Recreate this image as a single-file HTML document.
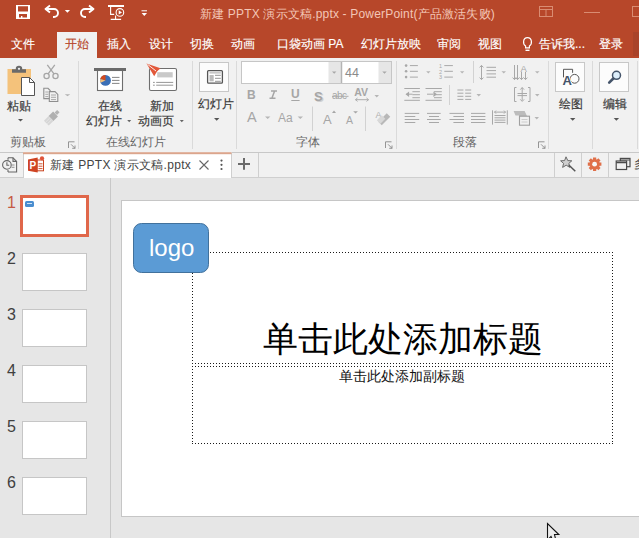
<!DOCTYPE html>
<html><head><meta charset="utf-8">
<style>
*{box-sizing:border-box;margin:0;padding:0}
html,body{width:639px;height:538px;overflow:hidden;background:#e6e6e6;font-family:"Liberation Sans",sans-serif;position:relative}
.a{position:absolute}
.t{position:absolute;white-space:nowrap;line-height:1}
#title{left:0;top:0;width:639px;height:32px;background:#b7472a}
#tabs{left:0;top:32px;width:639px;height:26px;background:#b7472a}
.tab{position:absolute;top:38px;color:#fff;-webkit-text-stroke:0.15px #fff;font-size:12px;line-height:1;white-space:nowrap}
#ribbon{left:0;top:58px;width:639px;height:94px;background:#f1f1f1}
.sep{position:absolute;width:1px;background:#dadada}
.rt{position:absolute;color:#3c3c3c;-webkit-text-stroke:0.2px #3c3c3c;font-size:12px;line-height:1;white-space:nowrap}
.gl{position:absolute;color:#666;font-size:12px;line-height:1;white-space:nowrap;top:136px}
#doctabs{left:0;top:152px;width:639px;height:26px;background:#f1f1f1;border-bottom:1px solid #d4d4d4}
</style></head><body>
<div id="title" class="a"></div>
<div id="tabs" class="a"></div>
<div class="a" style="left:57px;top:32px;width:40px;height:26px;background:#f1f1f1"></div>
<div class="a" style="left:633px;top:32px;width:6px;height:24px;background:#a9432a"></div>
<div class="t" style="left:200px;top:8px;color:#f3c6b6;font-size:12px;letter-spacing:0.18px">新建 PPTX 演示文稿.pptx - PowerPoint(产品激活失败)</div>
<div class="tab" style="left:11px">文件</div>
<div class="tab" style="left:65px;color:#b7472a;-webkit-text-stroke:0.15px #b7472a">开始</div>
<div class="tab" style="left:107px">插入</div>
<div class="tab" style="left:149px">设计</div>
<div class="tab" style="left:190px">切换</div>
<div class="tab" style="left:231px">动画</div>
<div class="tab" style="left:277px">口袋动画 PA</div>
<div class="tab" style="left:361px">幻灯片放映</div>
<div class="tab" style="left:437px">审阅</div>
<div class="tab" style="left:478px">视图</div>
<div class="tab" style="left:539px">告诉我...</div>
<div class="tab" style="left:599px">登录</div>

<div id="ribbon" class="a"></div>
<div class="sep" style="left:78px;top:61px;height:88px"></div>
<div class="sep" style="left:192px;top:61px;height:88px"></div>
<div class="sep" style="left:236px;top:61px;height:88px"></div>
<div class="sep" style="left:396px;top:61px;height:88px"></div>
<div class="sep" style="left:548px;top:61px;height:88px"></div>
<div class="sep" style="left:592px;top:61px;height:88px"></div>
<div class="sep" style="left:637px;top:61px;height:88px"></div>

<div class="rt" style="left:7px;top:100px">粘贴</div>
<div class="rt" style="left:98px;top:100px">在线</div>
<div class="rt" style="left:86px;top:115px">幻灯片</div>
<div class="rt" style="left:150px;top:100px">新加</div>
<div class="rt" style="left:138px;top:115px">动画页</div>
<div class="rt" style="left:198px;top:98px">幻灯片</div>
<div class="rt" style="left:559px;top:98px">绘图</div>
<div class="rt" style="left:603px;top:98px">编辑</div>
<div class="gl" style="left:10px">剪贴板</div>
<div class="gl" style="left:106px">在线幻灯片</div>
<div class="gl" style="left:296px">字体</div>
<div class="gl" style="left:453px">段落</div>

<svg class="a" style="left:0;top:0" width="639" height="538" viewBox="0 0 639 538" font-family="Liberation Sans, sans-serif">
<!-- doc tab bar -->
<rect x="0" y="152" width="639" height="26" fill="#f1f1f1"/>
<path d="M0,152.5 H639" stroke="#c8c8c8" stroke-width="1"/>
<path d="M0,177.5 H639" stroke="#cfcfcf" stroke-width="1"/>
<rect x="23" y="152" width="208.5" height="26" fill="#fff"/>
<path d="M23.5,153 V178 M231.5,153 V178 M258.5,153 V178 M554.5,153 V178 M581.5,153 V178 M608.5,153 V178" stroke="#cfcfcf" stroke-width="1"/>
<rect x="23" y="152.2" width="208.5" height="2" fill="#dba58c"/>
<!-- history icon -->
<g fill="none" stroke="#666" stroke-width="1.1">
 <path d="M8,157.8 H13 L16.6,161.4 V172 H8 M8,157.8 V159.8 M8,170 V172"/>
 <path d="M13,157.8 V161.4 H16.6"/>
 <circle cx="6.9" cy="164.9" r="4.3" fill="#f1f1f1"/>
 <path d="M6.9,162.3 V165.2 H9.2"/>
 <path d="M11.5,165 h3 M11.5,167.3 h3" stroke="#888" stroke-width="0.9"/>
</g>
<!-- ppt icon -->
<rect x="36.8" y="160" width="6.7" height="10.8" fill="#fff" stroke="#c8431f" stroke-width="1"/>
<path d="M38.5,163.8 h4 M38.5,166.2 h4 M38.5,168.6 h4" stroke="#c8431f" stroke-width="0.9"/>
<path d="M28,159.4 L37.7,157.6 V172.6 L28,170.8 Z" fill="#cf4423"/>
<text x="29.6" y="169.2" font-size="10" font-weight="bold" fill="#fff">P</text>
<circle cx="42" cy="158.3" r="2.1" fill="#e0543a"/>
<!-- close x, more, plus -->
<path d="M199.5,160.5 L208.5,169.5 M208.5,160.5 L199.5,169.5" stroke="#666" stroke-width="1.1"/>
<circle cx="221.5" cy="160.6" r="1.1" fill="#555"/><circle cx="221.5" cy="164.8" r="1.1" fill="#555"/><circle cx="221.5" cy="169" r="1.1" fill="#555"/>
<path d="M238,163.9 H250 M244,158 V169.7" stroke="#6a6a6a" stroke-width="2"/>
<!-- wand -->
<path d="M566,156.8 L567.8,160.6 L571.8,160.8 L568.8,163.4 L569.8,167.4 L566.2,165.2 L562.6,167.4 L563.6,163.4 L560.6,160.8 L564.6,160.6 Z" fill="#cfcfcf" stroke="#6b6b6b" stroke-width="1"/>
<path d="M568.8,165 L575.3,171.3" stroke="#555" stroke-width="1.5"/>
<!-- gear -->
<g fill="#e0704a">
 <circle cx="594.6" cy="164.2" r="5.2"/>
 <path d="M593,157.4 h3.2 v2.5 h-3.2z M593,168.6 h3.2 v2.4 h-3.2z M587.8,162.6 h2.5 v3.2 h-2.5z M598.9,162.6 h2.5 v3.2 h-2.5z"/>
 <path d="M593,157.4 h3.2 v2.5 h-3.2z M593,168.6 h3.2 v2.4 h-3.2z M587.8,162.6 h2.5 v3.2 h-2.5z M598.9,162.6 h2.5 v3.2 h-2.5z" transform="rotate(45 594.6 164.2)"/>
</g>
<circle cx="594.6" cy="164.2" r="2.4" fill="#f8f8f8"/>
<!-- window -->
<g fill="#f1f1f1" stroke="#4a4a4a" stroke-width="1.2">
 <rect x="620.3" y="158.4" width="9.7" height="8.3"/>
 <rect x="616.2" y="161" width="10.4" height="8.5"/>
</g>
<path d="M620.3,160 h9.7 M616.2,162.6 h10.4" stroke="#4a4a4a" stroke-width="1.2"/>
</svg>

<div class="t" style="left:50px;top:159px;color:#444;font-size:12px;letter-spacing:0.3px">新建 PPTX 演示文稿.pptx</div>

<div class="a" style="left:20px;top:195px;width:69px;height:42px;background:#fff;border:3px solid #e0674a"></div>
<div class="a" style="left:25px;top:201px;width:9px;height:6px;background:#4a8ed0;border-radius:1.5px"></div>
<div class="a" style="left:27px;top:203px;width:5px;height:1px;background:#cfe2f5"></div>
<div class="t" style="left:7px;top:195px;color:#c55a44;font-size:16px">1</div>
<div class="a" style="left:22px;top:253px;width:65px;height:38px;background:#fff;border:1px solid #c6c6c6"></div>
<div class="t" style="left:7px;top:251px;color:#404040;font-size:16px">2</div>
<div class="a" style="left:22px;top:309px;width:65px;height:38px;background:#fff;border:1px solid #c6c6c6"></div>
<div class="t" style="left:7px;top:307px;color:#404040;font-size:16px">3</div>
<div class="a" style="left:22px;top:365px;width:65px;height:38px;background:#fff;border:1px solid #c6c6c6"></div>
<div class="t" style="left:7px;top:363px;color:#404040;font-size:16px">4</div>
<div class="a" style="left:22px;top:421px;width:65px;height:38px;background:#fff;border:1px solid #c6c6c6"></div>
<div class="t" style="left:7px;top:419px;color:#404040;font-size:16px">5</div>
<div class="a" style="left:22px;top:477px;width:65px;height:38px;background:#fff;border:1px solid #c6c6c6"></div>
<div class="t" style="left:7px;top:475px;color:#404040;font-size:16px">6</div>
<div class="a" style="left:110px;top:178px;width:1px;height:360px;background:#c8c8c8"></div>
<div class="a" style="left:121px;top:200px;width:518px;height:317px;background:#fff;border:1px solid #c6c6c6;border-right:none"></div>
<svg class="a" style="left:0;top:0" width="639" height="538" viewBox="0 0 639 538">
<path d="M192,252.5 H613 M192,363.5 H613 M192,366.5 H613 M192,443.5 H613 M192.5,252 V364 M612.5,252 V364 M192.5,366 V444 M612.5,366 V444" fill="none" stroke="#1a1a1a" stroke-width="1" stroke-dasharray="1 2"/>
<rect x="133.5" y="223.5" width="75" height="49" rx="8" fill="#5b9bd5" stroke="#41719c" stroke-width="1"/>
</svg>
<div class="t" style="left:149px;top:236px;color:#fff;font-size:24px">logo</div>
<div class="t" style="left:263px;top:321px;color:#000;font-size:35px">单击此处添加标题</div>
<div class="t" style="left:339px;top:369px;color:#111;font-size:14px">单击此处添加副标题</div>

<svg class="a" style="left:0;top:0" width="639" height="538" viewBox="0 0 639 538">
<!-- QAT -->
<path d="M16,5 H30 V19 H16 Z M18,6.2 V11.6 H28 V6.2 Z M19,14 V17.6 H21 V16 H22.4 V17.6 H27 V14 Z" fill="#fff" fill-rule="evenodd"/>
<g fill="none" stroke="#fff" stroke-width="1.9" stroke-linejoin="round">
 <path d="M45.5,9 H54 A4,4 0 0 1 54,17 H53" />
 <path d="M50,5.5 L45.5,9 L50,12.5" />
 <path d="M93.5,9 H85 A4,4 0 0 0 85,17 H86" />
 <path d="M89,5.5 L93.5,9 L89,12.5" />
</g>
<path d="M64.8,10 h5.2 l-2.6,2.8z" fill="#fff"/>
<g fill="none" stroke="#fff" stroke-width="1.1">
 <path d="M110.6,6.9 V14.4 H114.2" />
 <path d="M115.6,15.5 V19"/>
 <circle cx="119.9" cy="12.4" r="3.8"/>
</g>
<path d="M108,5 H124 V7 H108 Z M110.7,18.7 H121.1 V19.9 H110.7 Z" fill="#fff"/>
<path d="M118.7,10.3 L122,12.4 L118.7,14.5 Z" fill="#fff"/>
<path d="M141.5,10.8 h5.5" stroke="#fff" stroke-width="1"/>
<path d="M141.6,13 h5.4 l-2.7,3z" fill="#fff"/>
<!-- window controls -->
<g fill="none" stroke="#d98c72" stroke-width="1">
 <rect x="539.5" y="6.5" width="13" height="10"/>
 <path d="M539.5,9.5 h13 M546,9.5 v7"/>
 <path d="M584,12.5 h16"/>
 <rect x="632.5" y="6.5" width="12" height="10"/>
</g>
<!-- lightbulb -->
<g fill="none" stroke="#fff" stroke-width="1.2">
 <path d="M525.6,47.8 V46 C522.5,44 522.8,37.6 527.5,37.6 C532.2,37.6 532.5,44 529.4,46 V47.8 Z"/>
</g>
<path d="M525.5,50.3 h4" stroke="#fff" stroke-width="1.4"/>

<!-- Paste -->
<rect x="7.5" y="69" width="23.5" height="25" fill="#f4c27b"/>
<path d="M12,69.2 h14 v3.6 h-14z M15.8,69.6 V68.4 A3.2,2.6 0 0 1 22.2,68.4 V69.6 Z" fill="#6a6a6a"/>
<circle cx="19" cy="68.8" r="1.1" fill="#f1f1f1"/>
<path d="M21.5,77.5 H29.5 L34.5,82.5 V95.5 H21.5 Z" fill="#fff" stroke="#555" stroke-width="1"/>
<path d="M29.5,77.5 V82.5 H34.5" fill="none" stroke="#555" stroke-width="1"/>
<path d="M18,119 h5 l-2.5,2.6z" fill="#555"/>
<!-- scissors -->
<g fill="none" stroke="#a6a6a6" stroke-width="1.3">
 <path d="M47.3,64.8 L54,73.8 M54.8,64.8 L48.1,73.8"/>
 <circle cx="46.6" cy="76" r="2.6"/>
 <circle cx="55.5" cy="76" r="2.6"/>
</g>
<!-- copy -->
<g fill="#f1f1f1" stroke="#8e8e8e" stroke-width="1.1">
 <path d="M43.8,88.3 H48 L50.2,90.5 V98.6 H43.8 Z"/>
 <path d="M49.3,91.6 H55 L57.8,94.4 V101.5 H49.3 Z"/>
</g>
<path d="M45.3,92 h3 M45.3,94.3 h3 M45.3,96.6 h3 M51,95 h5 M51,97.3 h5 M51,99.6 h5" stroke="#a0a0a0" stroke-width="0.9"/>
<path d="M64.8,94.2 h5.4 l-2.7,2z" fill="#b2b2b2"/>
<!-- format painter -->
<g transform="translate(-1 1.5) rotate(45 52 117)">
 <rect x="50.3" y="106.6" width="3.4" height="3.6" fill="#b4b4b4"/>
 <rect x="48.6" y="110.6" width="6.8" height="6.4" fill="#b0b0b0"/>
 <rect x="48.6" y="117" width="6.8" height="6.6" fill="#d6d6d6"/>
 <path d="M50.8,117.5 V123.5 M53.2,117.5 V123.5" stroke="#e6e6e6" stroke-width="0.8"/>
</g>
<!-- launchers -->
<g fill="none" stroke="#8a8a8a" stroke-width="0.9">
 <path d="M68.5,148 V141.8 H74.5"/><path d="M71,144.3 L75,148.3 M75,145.5 V148.3 H72.2"/>
 <path d="M385.5,148 V141.8 H391.5"/><path d="M388,144.3 L392,148.3 M392,145.5 V148.3 H389.2"/>
 <path d="M538.5,148 V141.8 H544.5"/><path d="M541,144.3 L545,148.3 M545,145.5 V148.3 H542.2"/>
</g>

<!-- online slides icon -->
<rect x="97.5" y="70.5" width="25" height="20" fill="#fff" stroke="#6e6e6e" stroke-width="1.1"/>
<rect x="94" y="68" width="32" height="3" fill="#6a6a6a"/>
<circle cx="105.5" cy="80.4" r="5.4" fill="#3b6fb6"/>
<path d="M105.5,80.4 L105.5,75 A5.4,5.4 0 0 0 100.3,79 Z" fill="#d24a1e"/>
<path d="M105.5,80.4 L100.3,79 A5.4,5.4 0 0 0 100.6,82.8 Z" fill="#f2c07c"/>
<path d="M112,77.4 h7.5 M112,80.4 h7.5 M112,83.4 h7.5" stroke="#777" stroke-width="0.9"/>
<path d="M127.2,120 h4 l-2,2.2z" fill="#666"/>
<!-- new animation page icon -->
<rect x="149.5" y="68.5" width="27" height="22" rx="1.5" fill="#fff" stroke="#6e6e6e" stroke-width="1.1"/>
<rect x="157.2" y="72.2" width="15.5" height="5.2" fill="#c9c9c9"/>
<path d="M153,82.4 h1.8 M156.2,82.4 h17 M153,85.2 h1.8 M156.2,85.2 h17" stroke="#8a8a8a" stroke-width="0.9"/>
<path d="M146.5,63.5 L160.5,68.2 L157,71.5 L154.2,76.3 Z" fill="#e2583a"/>
<path d="M147.5,64.3 L156,71" stroke="#fff" stroke-width="0.9"/>
<path d="M179.8,120 h4 l-2,2.2z" fill="#666"/>
<!-- slide layout button -->
<rect x="199.5" y="62.5" width="29" height="29" fill="#fcfcfc" stroke="#c8c8c8" stroke-width="1"/>
<rect x="207.6" y="70.6" width="14.8" height="12.6" rx="1" fill="#fff" stroke="#555" stroke-width="1.3"/>
<path d="M209.5,72.9 h11.3" stroke="#999" stroke-width="0.9"/>
<rect x="209.5" y="75" width="4.2" height="6.3" fill="#bbb"/>
<path d="M215,75.3 h5.8 M215,78.3 h5.8 M215,81.3 h5.8" stroke="#888" stroke-width="0.9"/>
<path d="M214,118 h5.4 l-2.7,2.8z" fill="#555"/>
<!-- drawing button -->
<rect x="555.5" y="62.5" width="29" height="29" fill="#fcfcfc" stroke="#c8c8c8" stroke-width="1"/>
<path d="M563.5,77.4 V69.3 H572.6 V72.8" fill="none" stroke="#555" stroke-width="1"/>
<circle cx="574.6" cy="78.8" r="4.4" fill="none" stroke="#555" stroke-width="1"/>
<path d="M570,118 h5.4 l-2.7,2.8z" fill="#555"/>
<text x="562.4" y="85" font-size="13" font-weight="bold" fill="#44546a" stroke="#fcfcfc" stroke-width="2" paint-order="stroke" font-family="Liberation Sans, sans-serif">A</text>
<!-- editing button -->
<rect x="599.5" y="62.5" width="29" height="29" fill="#fcfcfc" stroke="#c8c8c8" stroke-width="1"/>
<circle cx="616.5" cy="75.3" r="4" fill="#dceefb" stroke="#44546a" stroke-width="1.5"/>
<path d="M613.3,78.5 L609.2,82.6" stroke="#44546a" stroke-width="2.6" stroke-linecap="round"/>
<path d="M613.7,118 h5.4 l-2.7,2.8z" fill="#555"/>
</svg>

<svg class="a" style="left:0;top:0" width="639" height="538" viewBox="0 0 639 538" font-family="Liberation Sans, sans-serif">
<!-- font group -->
<rect x="241.5" y="61.5" width="150" height="22" fill="#fff" stroke="#c6c6c6" stroke-width="1"/>
<rect x="328.5" y="62" width="12.5" height="21" fill="#e6e6e6"/>
<rect x="378.5" y="62" width="12.5" height="21" fill="#e6e6e6"/>
<path d="M341.5,62 V83" stroke="#b4b4b4" stroke-width="1.5"/>
<path d="M332,71.5 h4.4 l-2.2,2.2z M382.3,71.5 h4.4 l-2.2,2.2z" fill="#a8a8a8"/>
<text x="345" y="76.8" font-size="12.5" fill="#8a8a8a">44</text>
<g fill="#a6a6a6">
<text x="247" y="99" font-size="12" font-weight="bold">B</text>
<path d="M271,91 H277 M269.5,98.3 H275.5 M274.6,91 L271.9,98.3" stroke="#a6a6a6" stroke-width="1.5" fill="none"/>
<text x="291" y="98.3" font-size="12" font-weight="bold">U</text>
<text x="247" y="122.3" font-size="14.5">A</text>
<text x="278" y="121.6" font-size="12">Aa</text>
<text x="323" y="124" font-size="13">A</text>
<text x="346" y="124" font-size="10.5">A</text>
</g>
<path d="M291.3,100.5 h8.3" stroke="#a6a6a6" stroke-width="1"/>
<text x="315.2" y="101.6" font-size="13" font-weight="bold" fill="#d0d0d0">S</text>
<text x="314" y="100.6" font-size="13" font-weight="bold" fill="#a6a6a6">S</text>
<text x="332" y="99.3" font-size="10" fill="#a6a6a6" letter-spacing="-0.6">abc</text>
<path d="M332,96.3 h16.5" stroke="#a6a6a6" stroke-width="0.9"/>
<text x="354.2" y="96" font-size="10.5" fill="#a6a6a6" font-weight="bold">AV</text>
<path d="M355.5,99.7 h13 M357.5,98 L355.5,99.7 L357.5,101.4 M366.5,98 L368.5,99.7 L366.5,101.4" fill="none" stroke="#a6a6a6" stroke-width="0.9"/>
<path d="M332,113 l2,-2.4 l2,2.4z M353.2,111.3 h4.7 l-2.35,2.2z" fill="#a6a6a6"/>
<path d="M265,116.6 h5.4 l-2.7,2.4z M297.6,116.6 h5.4 l-2.7,2.4z M374.5,95 h4.5 l-2.25,2.4z" fill="#b6b6b6"/>
<path d="M312.5,106.5 V131 M365.5,106.5 V131" stroke="#d2d2d2" stroke-width="1"/>
<!-- clear formatting -->
<text x="375.5" y="118" font-size="9" fill="#b0b0b0">A</text>
<path d="M380,123.5 L388.5,115" stroke="#b8b8b8" stroke-width="5"/>
<path d="M378.6,122 L383.5,117" stroke="#d8d8d8" stroke-width="5"/>
<!-- paragraph group -->
<g stroke="#a8a8a8" stroke-width="1" fill="none">
 <path d="M409.9,65.6 h8 M409.9,71.3 h8 M409.9,77.1 h8"/>
 <path d="M444.3,65.6 h8.6 M444.3,71.3 h8.6 M444.3,77.1 h8.6"/>
 <path d="M481.5,65.5 v14 M479.6,67.4 l1.9,-2 l1.9,2 M479.6,77.6 l1.9,2 l1.9,-2"/>
 <path d="M486.5,67.3 h9.5 M486.5,70.6 h9.5 M486.5,73.9 h9.5 M486.5,77.2 h9.5"/>
 <path d="M514.5,65 v14.5 M517.5,65 v14.5 M521.5,72 v7.5 M525.5,72 v7.5 M512.6,77.6 l1.9,2 l1.9,-2 M515.6,77.6 l1.9,2 l1.9,-2 M519.6,77.6 l1.9,2 l1.9,-2 M523.6,77.6 l1.9,2 l1.9,-2"/>
 <path d="M404.3,88.5 h15.6 M404.3,100.3 h15.6 M412.4,91.7 h7.5 M412.4,94.7 h7.5 M412.4,97.7 h7.5"/>
 <path d="M425.5,88.5 h16.3 M425.5,100.3 h16.3 M434,91.7 h7.8 M434,94.7 h7.8 M434,97.7 h7.8"/>
 <path d="M457.4,90 h6 M465.2,90 h6 M457.4,93.2 h6 M465.2,93.2 h6 M457.4,96.3 h6 M465.2,96.3 h6 M457.4,99.4 h6 M465.2,99.4 h6"/>
 <path d="M516.5,87.5 h-2 v14 h2 M528,87.5 h2 v14 h-2 M522.2,87.5 v13 M520.3,89.6 l1.9,-2 l1.9,2 M520.3,99.4 l1.9,2 l1.9,-2 M517.5,93.5 h9.5 M517.5,95.6 h9.5"/>
 <path d="M404.7,113.4 h14.5 M404.7,116.5 h10.6 M404.7,119.5 h14.5 M404.7,122.5 h10.6"/>
 <path d="M427,113.4 h13.7 M429,116.5 h10 M427,119.5 h13.7 M429,122.5 h10"/>
 <path d="M449.5,113.4 h14.5 M453.4,116.5 h10.6 M449.5,119.5 h14.5 M453.4,122.5 h10.6"/>
 <path d="M471,113.4 h14.4 M471,116.5 h14.4 M471,119.5 h14.4 M471,122.5 h14.4"/>
 <path d="M492.5,110.3 v14.3 M507.3,110.3 v14.3 M494.5,112.1 h11 M496,110.6 l-1.5,1.5 l1.5,1.5 M504,110.6 l1.5,1.5 l-1.5,1.5 M494.5,115.5 h11 M494.5,117.8 h11 M494.5,120.1 h11 M494.5,122.4 h11"/>
</g>
<g fill="#a8a8a8">
 <circle cx="406.1" cy="65.6" r="1.3"/><circle cx="406.1" cy="71.3" r="1.3"/><circle cx="406.1" cy="77.1" r="1.3"/>
 <text x="439" y="68" font-size="5.5">1</text><text x="439" y="73.6" font-size="5.5">2</text><text x="439" y="79.3" font-size="5.5">3</text>
 <text x="520.5" y="72" font-size="9.5">A</text>
 <path d="M405.5,94.2 l3.6,-2.8 v5.6z M437,94.2 l-3.6,-2.8 v5.6z"/>
 <path d="M406.5,94.2 h6" stroke="#a8a8a8" stroke-width="1"/>
 <path d="M427,94.2 h6" stroke="#a8a8a8" stroke-width="1"/>
 <path d="M513.6,111 h11 l4,8.6 h-9.6 v-4 l-3.5,0z" fill="#bcbcbc"/>
</g>
<rect x="519.5" y="116.2" width="10" height="9" fill="#f1f1f1" stroke="#a0a0a0" stroke-width="1.1"/>
<path d="M521.5,119.5 h6 M521.5,122 h6" stroke="#c4c4c4" stroke-width="0.8"/>
<path d="M426.2,71.2 h4.3 l-2.15,2.4z M460,71.2 h4.3 l-2.15,2.4z M501.5,71.2 h4.5 l-2.25,2.4z M535,71.2 h4.5 l-2.25,2.4z M476.5,94 h4.5 l-2.25,2.4z M535,94 h4.5 l-2.25,2.4z M534.5,117 h4.5 l-2.25,2.4z" fill="#b6b6b6"/>
<path d="M473.5,61 V83 M449.5,85 V105" stroke="#d2d2d2" stroke-width="1"/>
</svg>

<div class="t" style="left:634px;top:158px;color:#444;font-size:12px">多</div>
<svg class="a" style="left:0;top:0" width="639" height="538" viewBox="0 0 639 538">
<path d="M547.5,523.5 V540 L551,536.5 L553.5,542 L556,541 L554.5,534.5 L558.8,534.5 Z" fill="#ececec" stroke="#111" stroke-width="1.1"/>
</svg>
</body></html>
